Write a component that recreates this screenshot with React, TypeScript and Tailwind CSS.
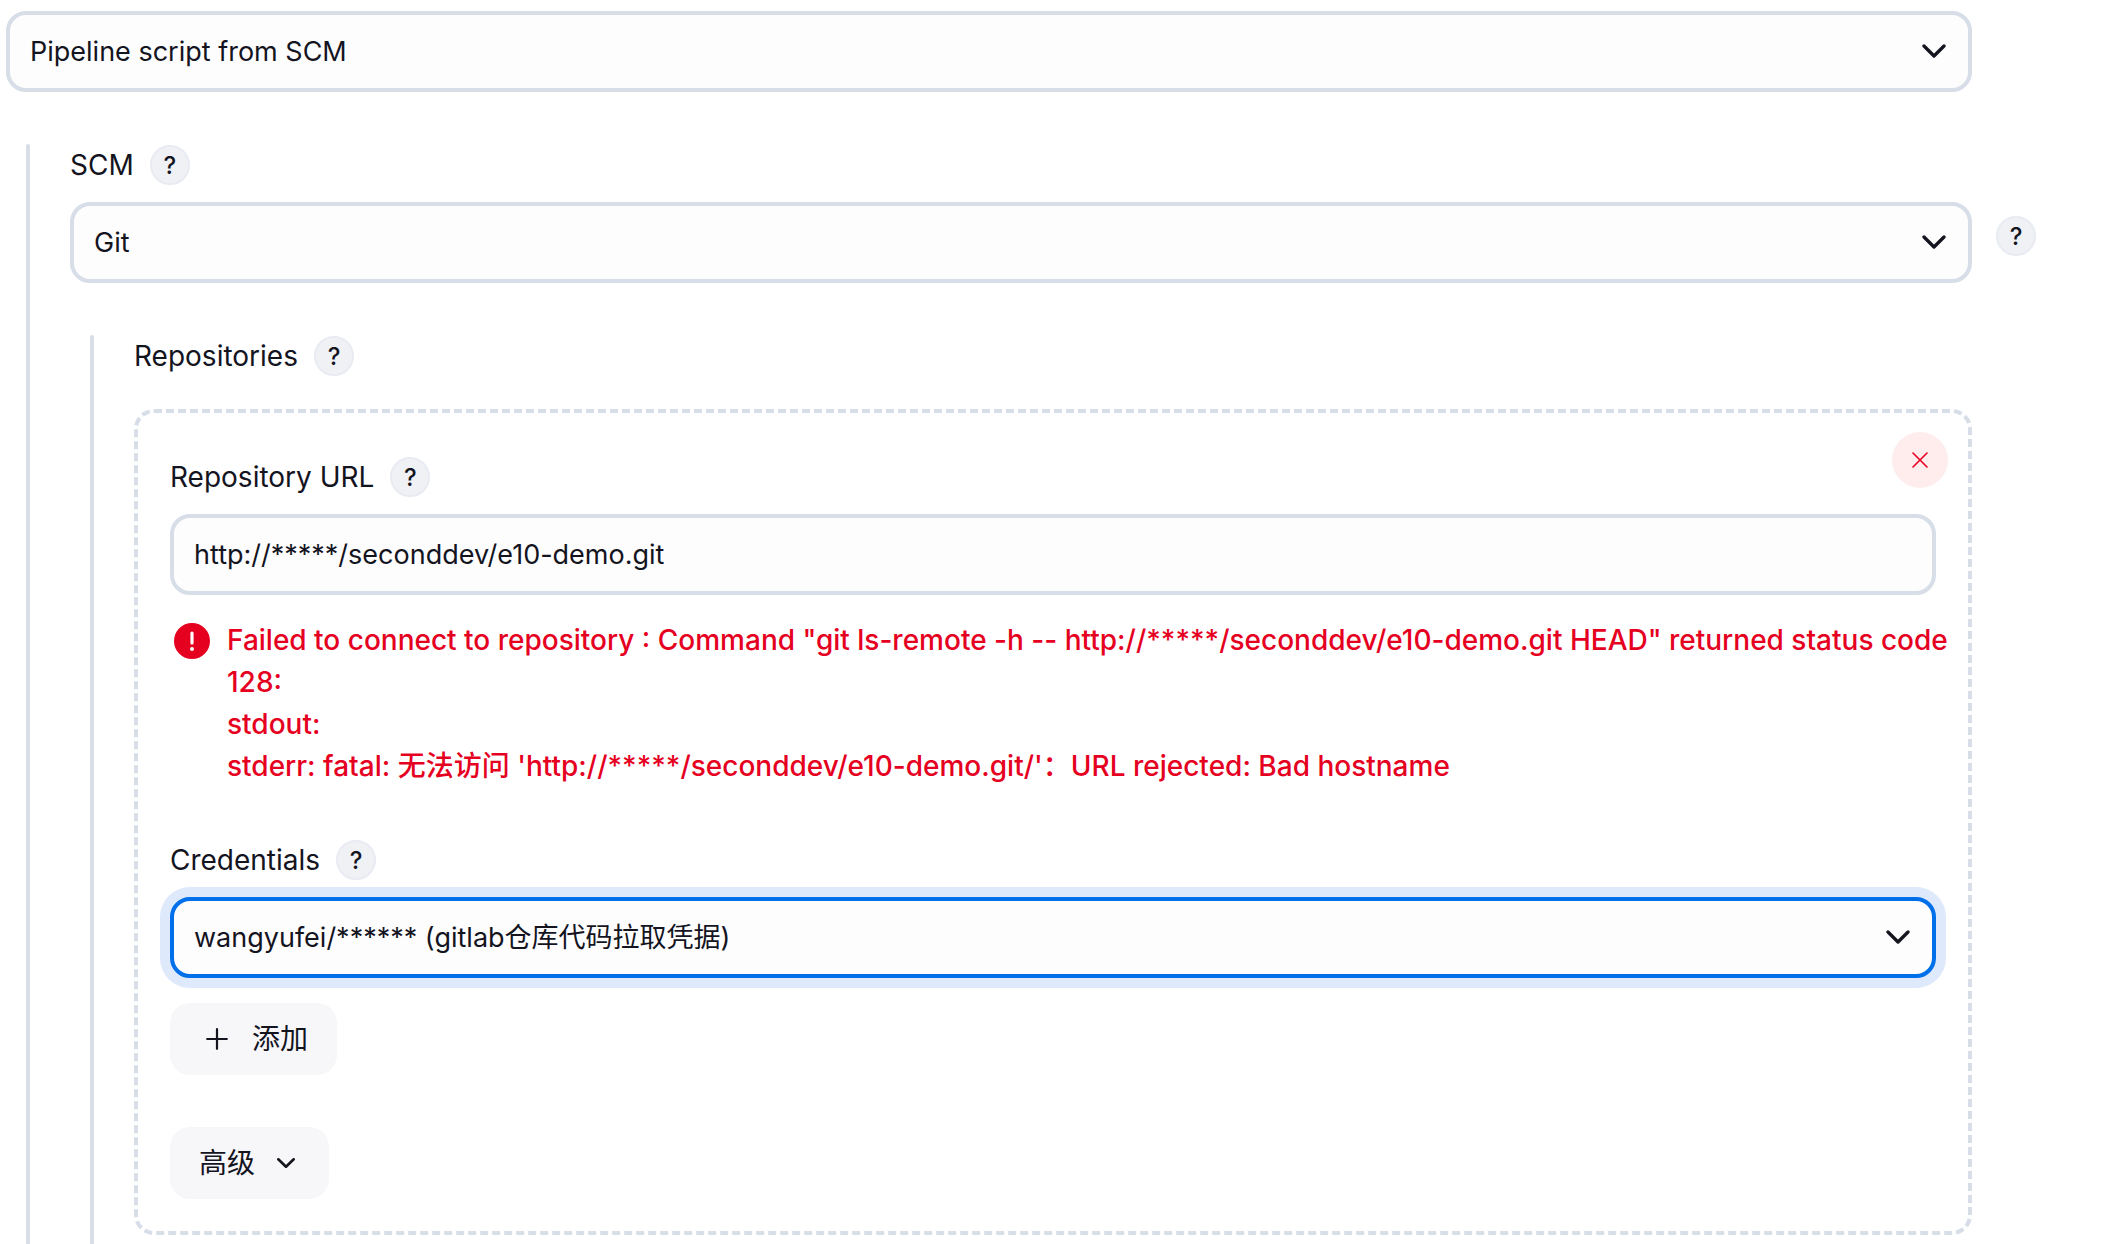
import type { ReactNode } from 'react';
import { clsx } from 'clsx';

const controlClass =
  'h-[81px] w-full rounded-[20px] border-4 bg-[#fdfdfe] pl-5 text-[27px] leading-[42px] text-[#14141f] outline-none';

function HelpButton({ topic }: { topic: string }) {
  return (
    <button
      type="button"
      aria-label={`Help for ${topic}`}
      className="flex size-10 shrink-0 items-center justify-center rounded-full border-2 border-[#e9ebf2] bg-[#f0f1f5] pt-0.5 text-2xl leading-none font-medium text-[#14141f]"
    >
      ?
    </button>
  );
}

function FieldLabel({ htmlFor, children }: { htmlFor?: string; children: string }) {
  return (
    <div className="flex h-10 items-center gap-4">
      {htmlFor ? <label htmlFor={htmlFor}>{children}</label> : <span>{children}</span>}
      <HelpButton topic={children} />
    </div>
  );
}

interface SelectProps {
  id: string;
  options: string[];
  label?: string;
  active?: boolean;
}

function Select({ id, options, label, active = false }: SelectProps) {
  return (
    <div className="grid flex-1 items-center">
      <select
        id={id}
        aria-label={label}
        className={clsx(
          controlClass,
          'col-start-1 row-start-1 appearance-none pr-16',
          active
            ? 'border-[#0070ea] shadow-[0_0_0_10px_#dee9fb]'
            : 'border-[#d7dee8]'
        )}
      >
        {options.map((option) => (
          <option key={option}>{option}</option>
        ))}
      </select>
      <svg
        viewBox="0 0 24 14"
        className="pointer-events-none col-start-1 row-start-1 mr-[26px] mb-0.5 h-[14px] w-6 justify-self-end"
        fill="none"
        stroke="#14141f"
        strokeWidth="3.3"
        strokeLinecap="round"
        strokeLinejoin="round"
      >
        <path d="M2 2l10 10L22 2" />
      </svg>
    </div>
  );
}

// Indented block with a vertical rule on its left
function NestedSection({ children }: { children: ReactNode }) {
  return (
    <div className="ml-5 flex flex-1 gap-10">
      <div className="w-1 shrink-0 rounded-t-full bg-[#d7dee8]" />
      <div className="flex min-w-0 flex-1 flex-col pt-px">{children}</div>
    </div>
  );
}

export default function App() {
  return (
    <div className="flex min-h-screen flex-col bg-white pt-[11px] pr-[136px] pl-[6px] font-['Inter','Noto_Sans_CJK_SC',sans-serif] text-[28px] leading-[42px] text-[#14141f]">
      <div className="mb-[52px] flex">
        <Select
          id="definition"
          label="Definition"
          options={['Pipeline script from SCM', 'Pipeline script']}
        />
      </div>

      <NestedSection>
        <FieldLabel htmlFor="scm">SCM</FieldLabel>
        <div className="-mr-16 mt-[17px] mb-[52px] flex gap-6">
          <Select id="scm" options={['Git', 'None']} />
          <div className="pt-[14px]">
            <HelpButton topic="Git" />
          </div>
        </div>

        <NestedSection>
          <FieldLabel>Repositories</FieldLabel>

          <div className="relative mt-[33px] mb-[9px] rounded-[20px] border-4 border-dashed border-[#d7dee8] px-8 pt-11 pb-8">
            <button
              type="button"
              aria-label="Delete repository"
              className="absolute top-[19px] right-5 flex size-14 items-center justify-center rounded-full bg-[#ffeded]"
            >
              <svg
                viewBox="0 0 16 16"
                className="size-4"
                fill="none"
                stroke="#e6001f"
                strokeWidth="1.6"
                strokeLinecap="round"
              >
                <path d="M1 1l14 14M15 1L1 15" />
              </svg>
            </button>

            <FieldLabel htmlFor="repository-url">Repository URL</FieldLabel>
            <input
              id="repository-url"
              type="text"
              defaultValue="http://*****/seconddev/e10-demo.git"
              className={clsx(controlClass, 'mt-[17px] block border-[#d7dee8] pr-5')}
            />

            <div className="-mr-6 mt-6 flex gap-[17px] pl-1 font-medium text-[#e6001f]">
              <svg viewBox="0 0 36 36" className="mt-1 size-9 shrink-0">
                <circle cx="18" cy="18" r="18" fill="#e6001f" />
                <path d="M18 10v10" stroke="#fff" strokeWidth="3.2" strokeLinecap="round" />
                <circle cx="18" cy="26" r="2" fill="#fff" />
              </svg>
              <p className="min-w-0 flex-1">
                Failed to connect to repository : Command "git ls-remote -h --
                http://*****/seconddev/e10-demo.git HEAD" returned status code 128:
                <br />
                stdout:
                <br />
                stderr: fatal: 无法访问 'http://*****/seconddev/e10-demo.git/'：URL
                rejected: Bad hostname
              </p>
            </div>

            <div className="mt-[53px]">
              <FieldLabel htmlFor="credentials">Credentials</FieldLabel>
            </div>
            <div className="mt-[17px] flex">
              <Select
                id="credentials"
                active
                options={['wangyufei/****** (gitlab仓库代码拉取凭据)']}
              />
            </div>

            <div className="mt-[25px] flex flex-col items-start gap-[52px]">
              <button
                type="button"
                className="flex h-[72px] items-center gap-6 rounded-[20px] bg-[#f7f7f9] pr-[29px] pl-9"
              >
                <svg
                  viewBox="0 0 22 22"
                  className="size-[22px]"
                  fill="none"
                  stroke="currentColor"
                  strokeWidth="2.2"
                  strokeLinecap="round"
                >
                  <path d="M11 1.2v19.6M1.2 11h19.6" />
                </svg>
                添加
              </button>
              <button
                type="button"
                className="flex h-[72px] items-center gap-[22px] rounded-[20px] bg-[#f7f7f9] pr-[34px] pl-[29px]"
              >
                高级
                <svg
                  viewBox="0 0 18 10"
                  className="h-[10px] w-[18px]"
                  fill="none"
                  stroke="currentColor"
                  strokeWidth="2.6"
                  strokeLinecap="round"
                  strokeLinejoin="round"
                >
                  <path d="M1.3 1.3L9 8.7l7.7-7.4" />
                </svg>
              </button>
            </div>
          </div>
        </NestedSection>
      </NestedSection>
    </div>
  );
}
